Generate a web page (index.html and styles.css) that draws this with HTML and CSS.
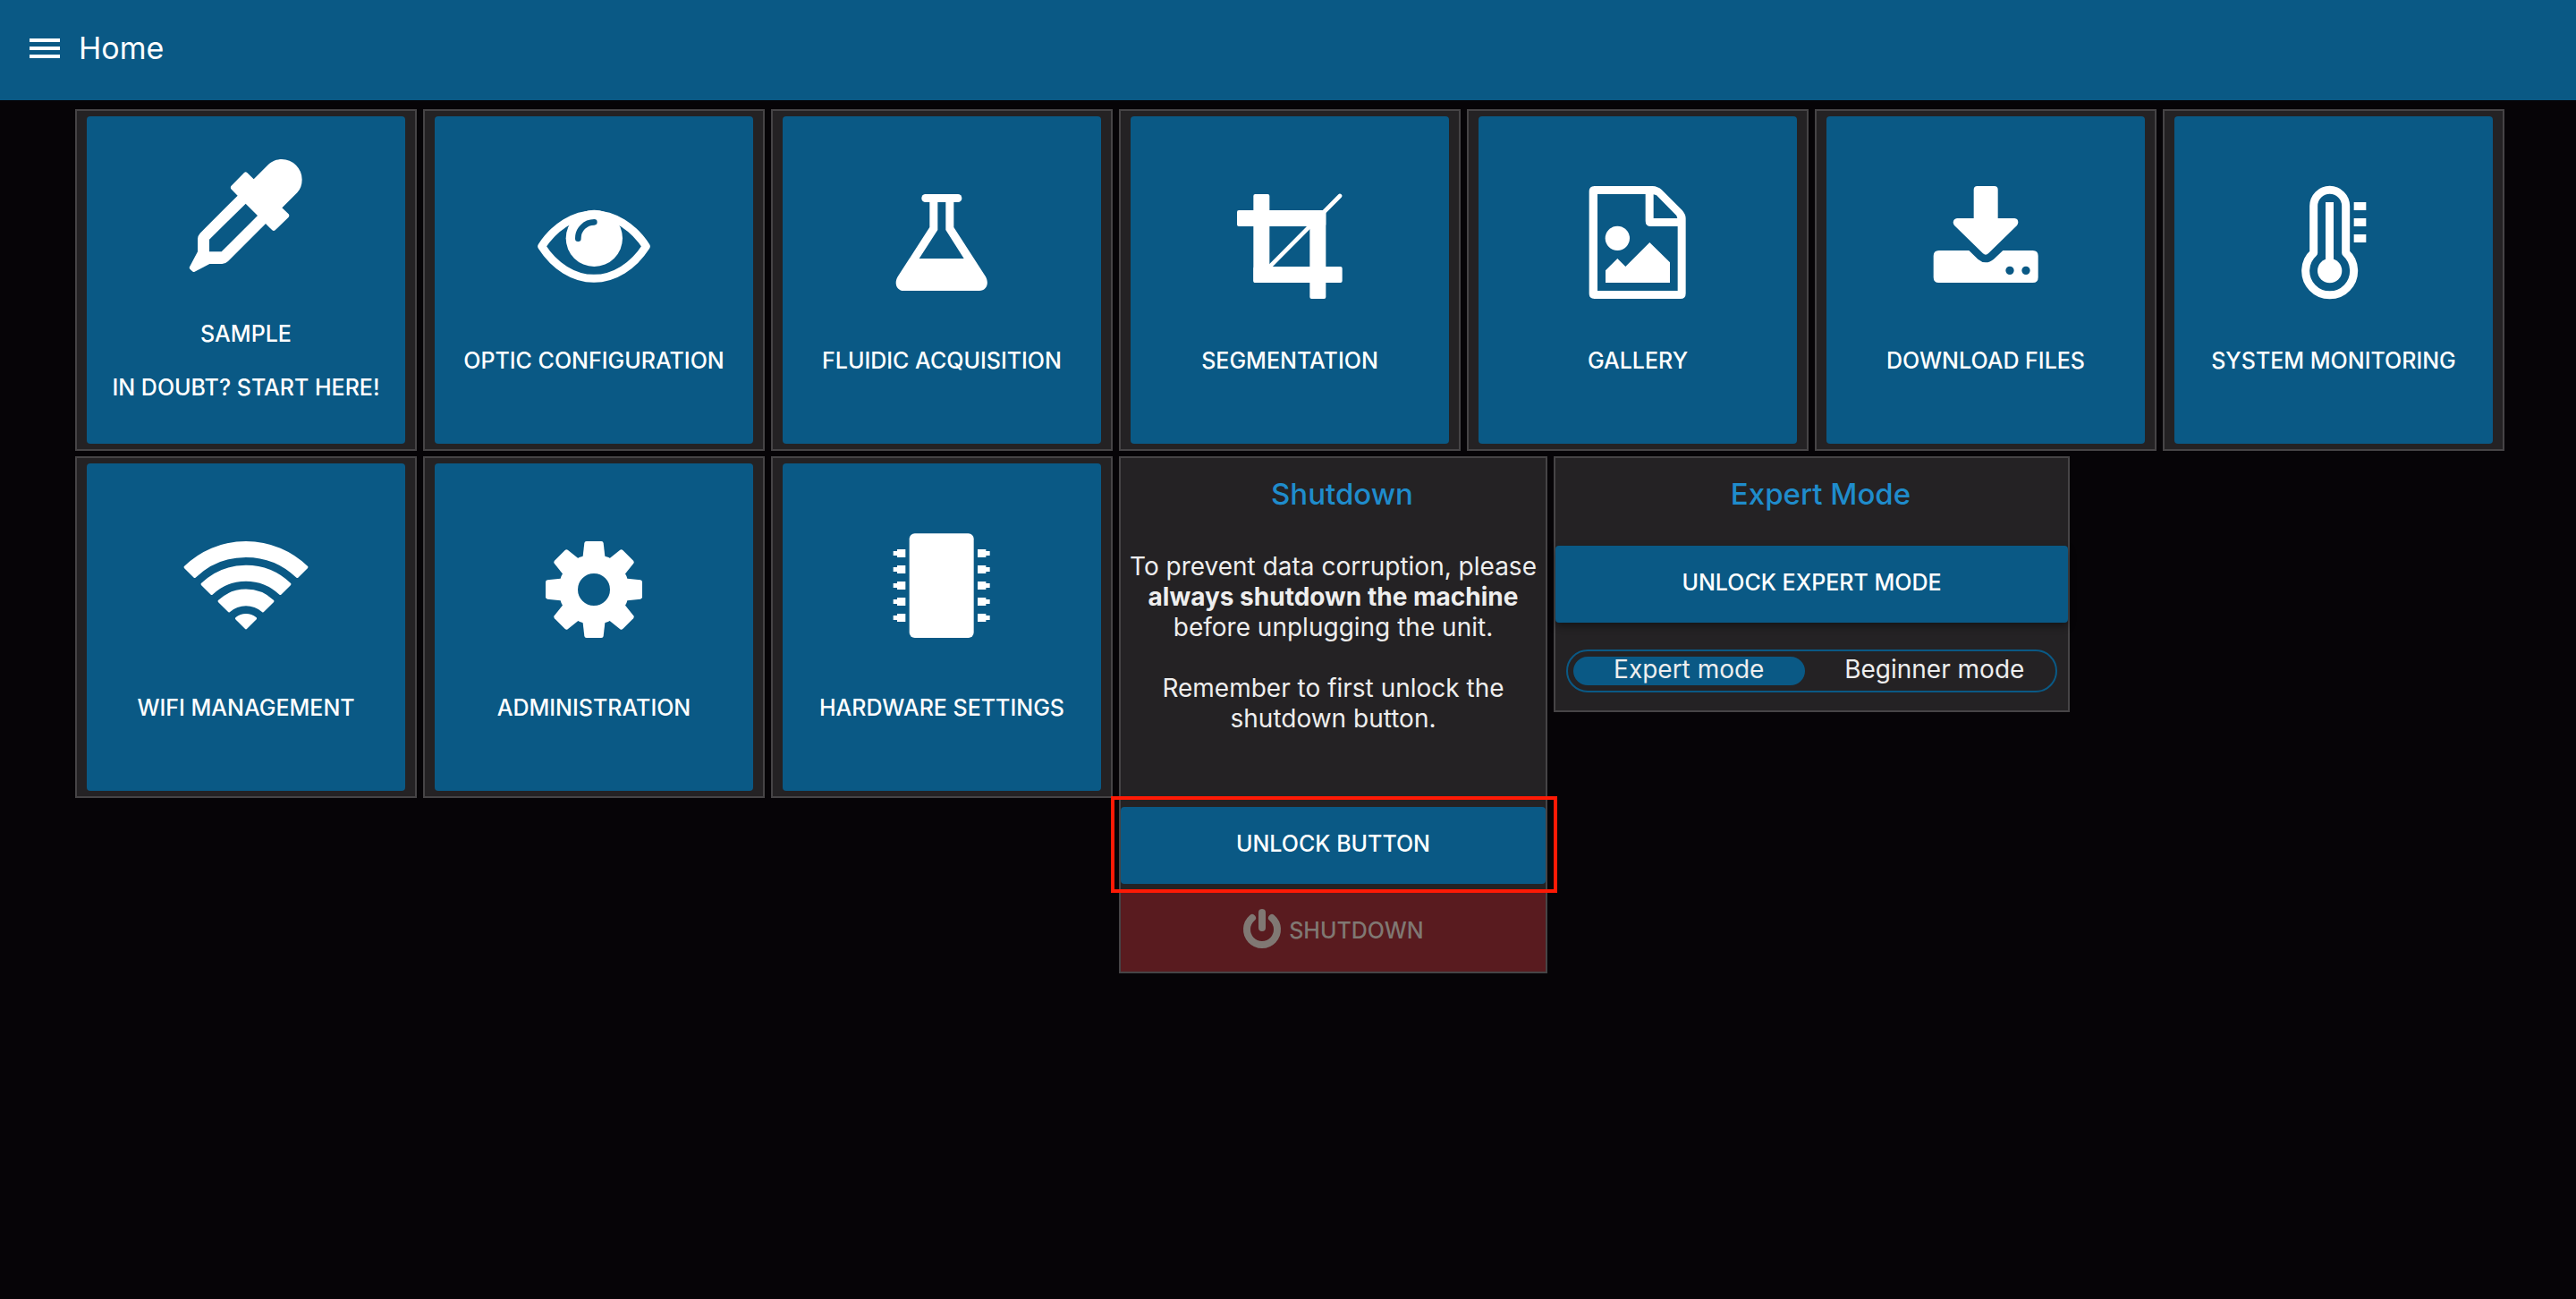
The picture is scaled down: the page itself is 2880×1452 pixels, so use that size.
FILE: index.html
```html
<!DOCTYPE html>
<html lang="en">
<head>
<meta charset="utf-8">
<meta name="viewport" content="width=device-width, initial-scale=1">
<title>Home</title>
<link rel="stylesheet" href="styles.css">
</head>
<body>
<header class="topbar">
  <button class="menu" type="button" aria-label="Open menu">
    <svg viewBox="0 0 34 22" aria-hidden="true"><path d="M0 0h34v4H0zM0 9h34v4H0zM0 18h34v4H0z"/></svg>
  </button>
  <h1 class="topbar-title">Home</h1>
</header>

<main class="dashboard">
  <div class="row row-top">
    <div class="card">
      <button class="tile" type="button">
        <svg class="icon" viewBox="612 507 432 432" aria-hidden="true"><path fill-rule="evenodd" d="M854 601L902 553C915 540 932 534 948 534A68 68 0 0 1 1016 602Q1016 628 1000 646L949 697L971 718Q975 723 971 728L926 772Q921 776 916 772L894 750L768 876Q760 884 748 885H706L656 911Q651 913 648 910L640 902Q637 899 639 895L666 844V800Q667 790 674 782L800 656L778 634Q775 629 778 624L822 579Q827 575 832 579ZM827 683L867 723L746 844H705V803Z"/></svg>
        <span class="labels"><span>SAMPLE</span><span>IN DOUBT? START HERE!</span></span>
      </button>
    </div>
    <div class="card">
      <button class="tile" type="button">
        <svg class="icon" viewBox="366 267 432 432" aria-hidden="true"><path class="line" d="M407 496C450 430 515 389 582 389S714 430 757 496C714 563 650 604 582 604S450 563 407 496Z"/><circle cx="583" cy="469" r="95"/><path class="cut" d="M529 470A54 54 0 0 1 583 415"/></svg>
        <span class="labels"><span>OPTIC CONFIGURATION</span></span>
      </button>
    </div>
    <div class="card">
      <button class="tile" type="button">
        <svg class="icon" viewBox="364 267 432 432" aria-hidden="true"><rect x="512" y="321" width="135" height="27" rx="13"/><path d="M539 345V432L432 598C418 622 430 645 452 645H706C729 645 740 622 727 598L620 432V345H593V441L654 537H504L566 441V345Z"/></svg>
        <span class="labels"><span>FLUIDIC ACQUISITION</span></span>
      </button>
    </div>
    <div class="card">
      <button class="tile" type="button">
        <svg class="icon" viewBox="375 267 432 432" aria-hidden="true"><rect x="414" y="375" width="298" height="54" rx="6"/><rect x="469" y="321" width="54" height="297" rx="6"/><rect x="469" y="564" width="298" height="54" rx="6"/><rect x="658" y="375" width="54" height="297" rx="6"/><path class="thin" d="M528 560L759 327"/></svg>
        <span class="labels"><span>SEGMENTATION</span></span>
      </button>
    </div>
    <div class="card">
      <button class="tile" type="button">
        <svg class="icon" viewBox="372 267 432 432" aria-hidden="true"><path fill-rule="evenodd" d="M443 294H638Q655 295 668 306L737 375Q750 390 749 405V654Q749 672 731 672H443Q425 672 425 654V312Q425 294 443 294ZM453 321V645H722V429H632Q614 429 614 411V321ZM641 322V402H721L718 393L651 325Z"/><circle cx="520" cy="469" r="41"/><path d="M480 577L520 537L547 564L628 483L696 550V618H480Z"/></svg>
        <span class="labels"><span>GALLERY</span></span>
      </button>
    </div>
    <div class="card">
      <button class="tile" type="button">
        <svg class="icon" viewBox="382 267 432 432" aria-hidden="true"><path d="M570 294H627Q639 294 639 306V402H695Q707 403 707 416Q706 422 703 426L607 520Q598 528 589 520L493 426Q489 421 489 415Q491 403 502 402H558V306Q558 294 570 294Z"/><path fill-rule="evenodd" d="M441 510H542L572 539Q585 550 598 550Q612 550 625 539L656 510H756Q774 510 774 528V600Q774 618 756 618H441Q423 618 423 600V528Q423 510 441 510ZM665 577a14 14 0 1 0 28 0a14 14 0 1 0-28 0ZM719 577a14 14 0 1 0 28 0a14 14 0 1 0-28 0Z"/></svg>
        <span class="labels"><span>DOWNLOAD FILES</span></span>
      </button>
    </div>
    <div class="card">
      <button class="tile" type="button">
        <svg class="icon" viewBox="408 267 432 432" aria-hidden="true"><path class="line" d="M557 518V361A54 54 0 0 1 665 361V518A81 81 0 1 1 557 518Z"/><circle cx="611" cy="578" r="41"/><path d="M597 348h27v200h-27zM692 348h41v27h-41zM692 402h41v27h-41zM692 456h41v27h-41z"/></svg>
        <span class="labels"><span>SYSTEM MONITORING</span></span>
      </button>
    </div>
  </div>

  <div class="row row-bottom">
    <div class="card">
      <button class="tile" type="button">
        <svg class="icon" viewBox="11 0 432 432" aria-hidden="true"><path class="soft" d="M24 141A292 292 0 0 1 430 141L399 172A248 248 0 0 0 55 172ZM81 198A211 211 0 0 1 373 198L342 229A167 167 0 0 0 112 229ZM138 255A130 130 0 0 1 316 255L284 287A86 86 0 0 0 170 287ZM196 313A49 49 0 0 1 258 313L227 344Z"/></svg>
        <span class="labels"><span>WIFI MANAGEMENT</span></span>
      </button>
    </div>
    <div class="card">
      <button class="tile" type="button">
        <svg class="icon" viewBox="-216 -216 432 432" aria-hidden="true"><defs><path id="tooth" d="M-37-112L-32-156Q-31-162-25-162H25Q31-162 32-156L37-112V-66H-37Z"/></defs><circle class="ring" r="86"/><use href="#tooth"/><use href="#tooth" transform="rotate(45)"/><use href="#tooth" transform="rotate(90)"/><use href="#tooth" transform="rotate(135)"/><use href="#tooth" transform="rotate(180)"/><use href="#tooth" transform="rotate(225)"/><use href="#tooth" transform="rotate(270)"/><use href="#tooth" transform="rotate(315)"/></svg>
        <span class="labels"><span>ADMINISTRATION</span></span>
      </button>
    </div>
    <div class="card">
      <button class="tile" type="button">
        <svg class="icon" viewBox="364 261 432 432" aria-hidden="true"><defs><path id="pins" d="M0 6h13V0h28v27H13v-6H0zM0 60h13v-6h28v27H13v-6H0zM0 114h13v-6h28v27H13v-6H0zM0 168h13v-6h28v27H13v-6H0zM0 222h13v-6h28v27H13v-6H0z"/></defs><rect x="471" y="289" width="216" height="350" rx="18"/><use href="#pins" transform="translate(417 342)"/><use href="#pins" transform="translate(741 342) scale(-1 1)"/></svg>
        <span class="labels"><span>HARDWARE SETTINGS</span></span>
      </button>
    </div>

    <section class="card panel">
      <h2 class="panel-title">Shutdown</h2>
      <p class="note">To prevent data corruption, please <strong>always shutdown the machine</strong> before unplugging the unit.</p>
      <p class="note note-last">Remember to first unlock the shutdown button.</p>
      <div class="highlighted">
        <button class="action" type="button">UNLOCK BUTTON</button>
        <span class="highlight"></span>
      </div>
      <button class="action danger" type="button" disabled>
        <svg class="power" viewBox="0 0 44 48" aria-hidden="true"><path d="M11 10A17 17 0 1 0 33 10M22 4V21"/></svg>
        SHUTDOWN
      </button>
    </section>

    <section class="card panel">
      <h2 class="panel-title">Expert Mode</h2>
      <button class="action raised" type="button">UNLOCK EXPERT MODE</button>
      <div class="switch" role="radiogroup" aria-label="Mode">
        <input type="radio" name="mode" id="mode-expert" checked><label for="mode-expert">Expert mode</label>
        <input type="radio" name="mode" id="mode-beginner"><label for="mode-beginner">Beginner mode</label>
      </div>
    </section>
  </div>
</main>
</body>
</html>
```
FILE: styles.css
```css
:root {
  --blue: #0a5985;
  --card: #242224;
  --line: #464446;
}

* {
  box-sizing: border-box;
}

body {
  margin: 0;
  min-height: 100vh;
  background: #060407;
  color: #eeeeee;
  font-family: Inter, "Liberation Sans", sans-serif;
  font-size: 28px;
}

button {
  border: 0;
  padding: 0;
  font: inherit;
  color: #ffffff;
  background: none;
}

h1, h2, p {
  margin: 0;
}

.topbar {
  display: flex;
  align-items: center;
  gap: 20px;
  height: 112px;
  padding: 0 32px 4px;
  background: var(--blue);
}

.menu {
  display: flex;
}

.menu svg {
  width: 36px;
  height: 22px;
  fill: #ffffff;
}

.topbar-title {
  font-size: 34px;
  font-weight: 400;
  line-height: 40px;
  color: #ffffff;
}

.dashboard {
  display: grid;
  gap: 6px;
  padding: 10px 80px 10px 84px;
}

.row {
  display: grid;
  gap: 7px;
  align-items: start;
}

.row-top {
  grid-template-columns: repeat(7, 1fr);
}

.row-bottom {
  grid-template-columns: 382fr 382fr 382fr 479fr 577fr 479fr;
}

.card {
  min-width: 0;
  border: 2px solid var(--line);
  background: var(--card);
  padding: 6px 11px;
}

.tile {
  display: flex;
  flex-direction: column;
  align-items: center;
  justify-content: center;
  gap: 36px;
  width: 100%;
  height: 366px;
  border-radius: 4px;
  background: var(--blue);
  font-size: 25px;
  font-weight: 500;
  line-height: 48px;
}

.icon {
  width: 144px;
  height: 144px;
  fill: #ffffff;
}

.icon .line,
.icon .cut,
.icon .thin,
.icon .ring {
  fill: none;
  stroke: #ffffff;
  stroke-width: 27;
  stroke-linejoin: round;
  stroke-linecap: round;
}

.icon .cut {
  stroke: var(--blue);
  stroke-width: 20;
}

.icon .thin {
  stroke-width: 14;
}

.icon .ring {
  stroke-width: 64;
}

.icon .soft {
  stroke: #ffffff;
  stroke-width: 10;
  stroke-linejoin: round;
}

.labels {
  display: grid;
  gap: 12px;
  white-space: nowrap;
}

.panel {
  display: flex;
  flex-direction: column;
  padding: 0;
}

.panel-title {
  padding-left: 20px;
  color: #1f8ccc;
  font-size: 33px;
  font-weight: 500;
  line-height: 80px;
  text-align: center;
}

.note {
  padding: 24px 6px 0;
  line-height: 34px;
  text-align: center;
}

.note strong {
  font-weight: 700;
}

.note-last {
  padding: 34px 24px 82px;
}

.highlighted {
  position: relative;
}

.highlight {
  position: absolute;
  inset: -12px -13px -10px -11px;
  border: 4px solid #ff1a05;
  pointer-events: none;
}

.action {
  display: flex;
  align-items: center;
  justify-content: center;
  gap: 8px;
  width: 100%;
  height: 86px;
  padding-bottom: 4px;
  border-radius: 4px;
  background: var(--blue);
  font-size: 25px;
  font-weight: 500;
}

.danger {
  height: 88px;
  margin-top: 10px;
  border-radius: 0;
  background: #591b1f;
  color: #807873;
}

.power {
  width: 44px;
  height: 48px;
  fill: none;
  stroke: currentColor;
  stroke-width: 8;
  stroke-linecap: round;
}

.raised {
  margin-top: 18px;
  box-shadow: 0 4px 8px rgba(0, 0, 0, 0.4);
}

.switch {
  display: grid;
  grid-template-columns: 1fr 1fr;
  column-gap: 16px;
  height: 48px;
  margin: 30px 12px 20px;
  padding: 6px;
  border: 2px solid var(--blue);
  border-radius: 24px;
}

.switch input {
  position: absolute;
  opacity: 0;
}

.switch label {
  border-radius: 16px;
  line-height: 28px;
  text-align: center;
}

.switch input:checked + label {
  background: var(--blue);
}
```
